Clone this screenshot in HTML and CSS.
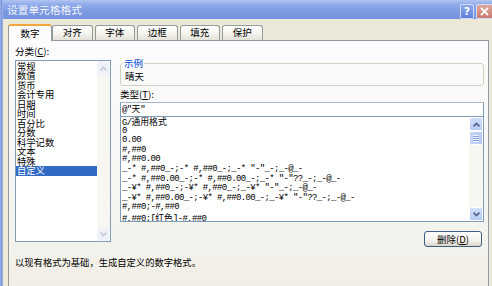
FILE: index.html
```html
<!DOCTYPE html>
<html lang="zh-CN">
<head>
<meta charset="utf-8">
<title>设置单元格格式</title>
<link rel="stylesheet" href="styles.css">
</head>
<body>
<div class="frame">
  <div class="edge"></div>
  <div class="dialog">
    <div class="titlebar">
      <span class="title">设置单元格格式</span>
      <div class="caption">
        <span class="cbtn help">?</span>
        <span class="cbtn close"><svg width="9" height="9" viewBox="0 0 9 9"><path d="M1 1L8 8M8 1L1 8" stroke="#fff" stroke-width="1.8" fill="none"/></svg></span>
      </div>
    </div>
    <div class="body">
      <div class="tabs">
        <div class="tab active">数字</div>
        <div class="tab">对齐</div>
        <div class="tab">字体</div>
        <div class="tab">边框</div>
        <div class="tab">填充</div>
        <div class="tab">保护</div>
      </div>
      <div class="panel">
        <div class="cols">
          <div class="left">
            <div class="label">分类(<u>C</u>):</div>
            <div class="listbox cat">
              <ul class="items">
                <li>常规</li>
                <li>数值</li>
                <li>货币</li>
                <li>会计专用</li>
                <li>日期</li>
                <li>时间</li>
                <li>百分比</li>
                <li>分数</li>
                <li>科学记数</li>
                <li>文本</li>
                <li>特殊</li>
                <li class="sel">自定义</li>
              </ul>
              <div class="vscroll disabled">
                <div class="sbtn"><svg width="7" height="5" viewBox="0 0 7 5"><polyline points="0.6,4.4 3.5,1.4 6.4,4.4" fill="none" stroke="#c3c8d2" stroke-width="1.5"/></svg></div>
                <div class="track"></div>
                <div class="sbtn"><svg width="7" height="5" viewBox="0 0 7 5"><polyline points="0.6,0.6 3.5,3.6 6.4,0.6" fill="none" stroke="#c3c8d2" stroke-width="1.5"/></svg></div>
              </div>
            </div>
          </div>
          <div class="right">
            <fieldset class="sample">
              <legend>示例</legend>
              <div class="sample-val">晴天</div>
            </fieldset>
            <div class="label type-label">类型(<u>T</u>):</div>
            <div class="input">@"<span class="cjk">天</span>"</div>
            <div class="listbox types">
              <ul class="items mono">
                <li>G/<span class="cjk">通用格式</span></li>
                <li>0</li>
                <li>0.00</li>
                <li>#,##0</li>
                <li>#,##0.00</li>
                <li>_-* #,##0_-;-* #,##0_-;_-* "-"_-;_-@_-</li>
                <li>_-* #,##0.00_-;-* #,##0.00_-;_-* "-"??_-;_-@_-</li>
                <li>_-¥* #,##0_-;-¥* #,##0_-;_-¥* "-"_-;_-@_-</li>
                <li>_-¥* #,##0.00_-;-¥* #,##0.00_-;_-¥* "-"??_-;_-@_-</li>
                <li>#,##0;-#,##0</li>
                <li>#,##0;[<span class="cjk">红色</span>]-#,##0</li>
              </ul>
              <div class="vscroll">
                <div class="sbtn"><svg width="7" height="5" viewBox="0 0 7 5"><polyline points="0.6,4.4 3.5,1.4 6.4,4.4" fill="none" stroke="#4d6185" stroke-width="1.6"/></svg></div>
                <div class="thumb"><span class="grip"></span></div>
                <div class="track"></div>
                <div class="sbtn"><svg width="7" height="5" viewBox="0 0 7 5"><polyline points="0.6,0.6 3.5,3.6 6.4,0.6" fill="none" stroke="#4d6185" stroke-width="1.6"/></svg></div>
              </div>
            </div>
            <div class="btnrow"><button class="btn">删除(<u>D</u>)</button></div>
          </div>
        </div>
        <div class="hint">以现有格式为基础，生成自定义的数字格式。</div>
      </div>
    </div>
  </div>
</div>
</body>
</html>
```
FILE: styles.css
```css
* { box-sizing: border-box; margin: 0; padding: 0; }
html, body { width: 492px; height: 286px; overflow: hidden; }
body {
  background: #ece9d8;
  font-family: "Noto Sans CJK SC", "Noto Sans", sans-serif;
  font-size: 9.5px;
  color: #000;
}
.frame { display: flex; height: 286px; }
.edge { width: 3px; background: linear-gradient(90deg, #9fb3e8, #7c98df 50%, #a8b9e6); }
.dialog { flex: 1; display: flex; flex-direction: column; min-width: 0; }

.titlebar {
  height: 22px;
  display: flex;
  align-items: center;
  padding-left: 4px;
  background: linear-gradient(#b0c4f0, #8eaae8 25%, #7d9ae2 60%, #7694df);
  color: #f3f6fd;
}
.title { font-size: 10.7px; line-height: 12px; }
.caption { margin-left: auto; align-self: flex-start; margin-top: 4px; display: flex; gap: 2px; }
.cbtn {
  width: 14px; height: 15px;
  border: 1px solid #d2dcf6;
  border-radius: 2px;
  display: flex; align-items: center; justify-content: center;
}
.help {
  background: linear-gradient(#8eaaea, #5b80da);
  color: #fff;
  font: bold 11px "DejaVu Sans", sans-serif;
}
.close {
  width: 16px;
  background: linear-gradient(#e0a79c, #c97c70);
  border-right: none;
  border-radius: 2px 0 0 2px;
}

.body { flex: 1; display: flex; flex-direction: column; padding: 5px 3px 0 5px; }
.tabs { display: flex; align-items: flex-end; height: 16px; position: relative; z-index: 1; }
.tab {
  width: 40.5px; height: 15px;
  margin-left: 2px;
  border: 1px solid #919b9c;
  border-bottom: none;
  border-radius: 3px 3px 0 0;
  background: linear-gradient(#ffffff, #f4f3ee 55%, #e4e2d8);
  text-align: center;
  line-height: 13px;
  font-size: 9.5px;
}
.tab.active {
  width: 44px; height: 17px;
  margin-left: 0; margin-bottom: -1px;
  background: #fcfcfe;
  border-top: 2px solid #f2a63c;
  line-height: 14px;
}
.tab.active + .tab { margin-left: 0; }

.panel {
  height: 250px;
  border: 1px solid #919b9c;
  background: linear-gradient(#fcfcfe, #f5f4ef 70%, #f0eee6);
  padding: 5px 4px 0 6px;
}
.cols { display: flex; gap: 9px; }
.left { width: 96px; }
.right { flex: 1; min-width: 0; }
.label { line-height: 10px; height: 10px; white-space: nowrap; }

.listbox { border: 1px solid #7f9db9; background: #fff; display: flex; overflow: hidden; }
.items { list-style: none; flex: 1; min-width: 0; overflow: hidden; }
.items li { white-space: nowrap; }
.cat { height: 182px; margin-top: 4px; }
.cat .items { padding-top: 0.5px; }
.cat .items li { height: 9.5px; line-height: 9.5px; padding-left: 1px; font-size: 9.3px; }
.cat .items li.sel { background: #316ac5; color: #fff; }

.vscroll { width: 13px; display: flex; flex-direction: column; background: #f7f6f1; }
.types .vscroll { width: 14px; }
.sbtn {
  height: 14px;
  display: flex; align-items: center; justify-content: center;
  border: 1px solid #fff;
  border-radius: 2px;
  background: linear-gradient(#d2defc, #b9cbf5);
}
.vscroll.disabled .sbtn { background: #eef1f7; border-color: #f6f7fb; }
.track { flex: 1; }
.thumb {
  height: 14px;
  border: 1px solid #fff;
  border-radius: 2px;
  background: linear-gradient(90deg, #c6d5fb, #b7c9f5);
  display: flex; align-items: center; justify-content: center;
}
.grip {
  width: 6px; height: 7px;
  background: repeating-linear-gradient(#eef2fd 0 1px, #8da4d6 1px 2px);
}

.sample {
  margin-top: 11px;
  height: 29px;
  border: 1px solid #d0d0bf;
  border-radius: 3px;
  padding: 0 0 0 2px;
}
.sample legend {
  padding: 0 1px;
  line-height: 12px;
  color: #0046d5;
  font-size: 9.5px;
}
.sample-val { padding-left: 2px; margin-top: 2px; line-height: 10px; }
.type-label { margin-top: 3px; }
.input {
  margin-top: 3px;
  height: 15px;
  border: 1px solid #7f9db9;
  border-top-color: #a9b8c8;
  background: #fff;
  padding-left: 1px;
  line-height: 12px;
  font-family: "Liberation Mono", "Noto Sans CJK SC", monospace;
  font-size: 9px;
  letter-spacing: -0.65px;
}
.types { height: 106px; margin-top: -1px; }
.mono {
  font-family: "Liberation Mono", "Noto Sans CJK SC", monospace;
  font-size: 9px;
  letter-spacing: -0.65px;
  padding-left: 1px;
}
.types .items li { height: 9.6px; line-height: 9.6px; }
.cjk { font-family: "Noto Sans CJK SC", sans-serif; font-size: 8.8px; letter-spacing: 0; }

.btnrow { display: flex; justify-content: flex-end; margin-top: 9px; padding-right: 2px; }
.btn {
  width: 58px; height: 16px;
  border: 1px solid #3f5f82;
  border-radius: 3px;
  background: linear-gradient(#ffffff, #f3f2ec 65%, #d9d4c8);
  font-family: "Noto Sans CJK SC", sans-serif;
  font-size: 9.5px;
  line-height: 13px;
  color: #000;
}
.hint { margin-top: 10px; line-height: 10px; font-size: 9.3px; white-space: nowrap; }
```
